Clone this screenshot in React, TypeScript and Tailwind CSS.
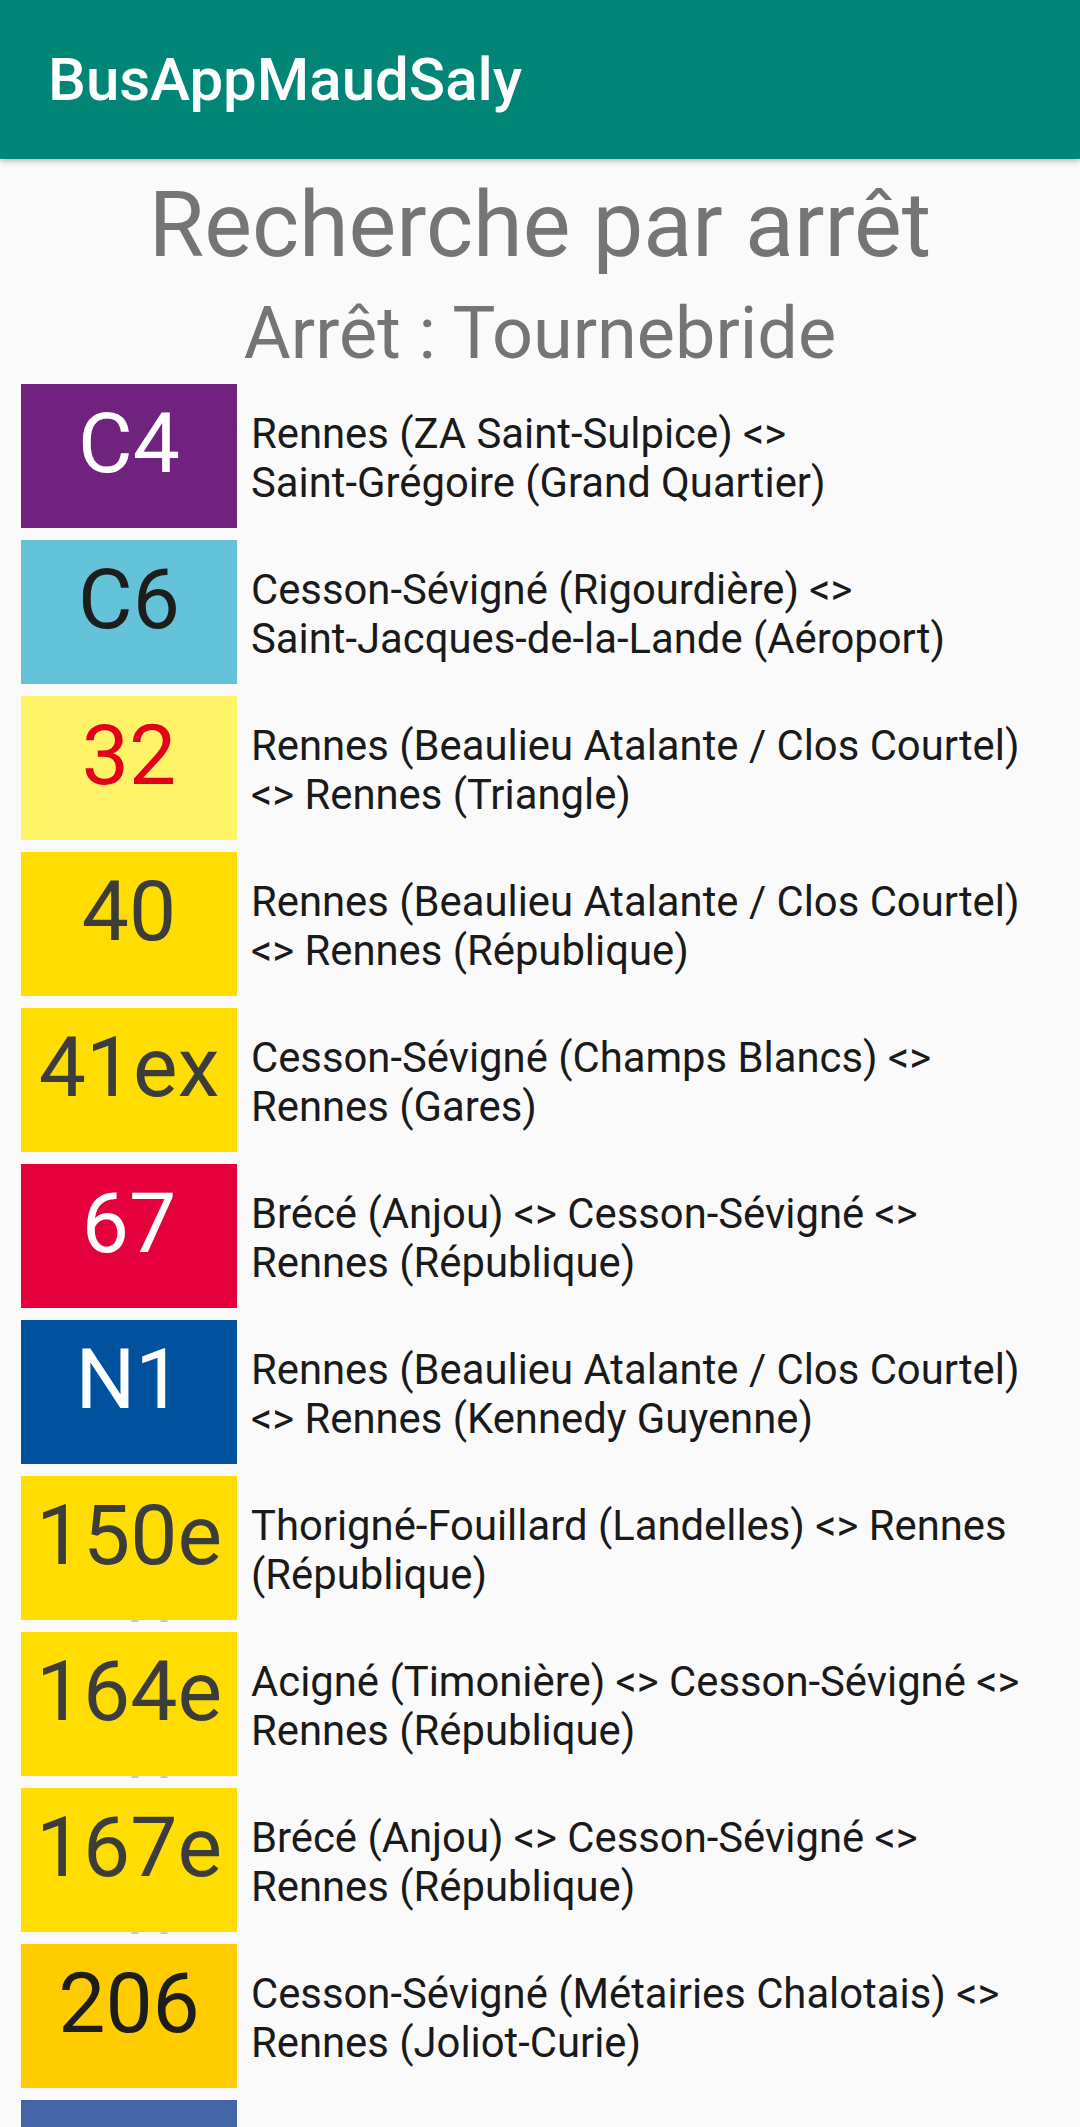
import React from 'react';

type Line = {
  code: string;
  bg: string;
  fg: string;
  text: string[];
  marks?: boolean;
};

const lines: Line[] = [
  {
    code: 'C4',
    bg: 'bg-[#6f237f]',
    fg: 'text-white',
    text: ['Rennes (ZA Saint-Sulpice) <>', 'Saint-Grégoire (Grand Quartier)'],
  },
  {
    code: 'C6',
    bg: 'bg-[#64c3d9]',
    fg: 'text-[#1d1d1b]',
    text: ['Cesson-Sévigné (Rigourdière) <>', 'Saint-Jacques-de-la-Lande (Aéroport)'],
  },
  {
    code: '32',
    bg: 'bg-[#fff367]',
    fg: 'text-[#e2001a]',
    text: ['Rennes (Beaulieu Atalante / Clos Courtel)', '<> Rennes (Triangle)'],
  },
  {
    code: '40',
    bg: 'bg-[#ffdd00]',
    fg: 'text-[#3c3c3b]',
    text: ['Rennes (Beaulieu Atalante / Clos Courtel)', '<> Rennes (République)'],
  },
  {
    code: '41ex',
    bg: 'bg-[#ffdd00]',
    fg: 'text-[#3c3c3b]',
    text: ['Cesson-Sévigné (Champs Blancs) <>', 'Rennes (Gares)'],
  },
  {
    code: '67',
    bg: 'bg-[#e4003a]',
    fg: 'text-white',
    text: ['Brécé (Anjou) <> Cesson-Sévigné <>', 'Rennes (République)'],
  },
  {
    code: 'N1',
    bg: 'bg-[#00519e]',
    fg: 'text-white',
    text: ['Rennes (Beaulieu Atalante / Clos Courtel)', '<> Rennes (Kennedy Guyenne)'],
  },
  {
    code: '150e',
    bg: 'bg-[#ffdd00]',
    fg: 'text-[#3c3c3b]',
    text: ['Thorigné-Fouillard (Landelles) <> Rennes', '(République)'],
    marks: true,
  },
  {
    code: '164e',
    bg: 'bg-[#ffdd00]',
    fg: 'text-[#3c3c3b]',
    text: ['Acigné (Timonière) <> Cesson-Sévigné <>', 'Rennes (République)'],
    marks: true,
  },
  {
    code: '167e',
    bg: 'bg-[#ffdd00]',
    fg: 'text-[#3c3c3b]',
    text: ['Brécé (Anjou) <> Cesson-Sévigné <>', 'Rennes (République)'],
    marks: true,
  },
  {
    code: '206',
    bg: 'bg-[#ffcc00]',
    fg: 'text-[#1d1d1b]',
    text: ['Cesson-Sévigné (Métairies Chalotais) <>', 'Rennes (Joliot-Curie)'],
  },
  {
    code: '',
    bg: 'bg-[#4565a9]',
    fg: 'text-white',
    text: [],
  },
];

function LineRow({ line }: { line: Line }) {
  return (
    <div className="flex items-start">
      <div
        className={`relative flex h-[144px] w-[216px] shrink-0 justify-center pt-[18px] ${line.bg}`}
      >
        <span className={`text-[84px] leading-none ${line.fg}`}>{line.code}</span>
        {/* tiny bits of a clipped second line peeking under the badge */}
        {line.marks && (
          <>
            <span className="absolute top-full left-[110px] h-[2px] w-[8px] rounded-t-full bg-[#c8c8c2]" />
            <span className="absolute top-full left-[139px] h-[2px] w-[8px] rounded-t-full bg-[#c8c8c2]" />
          </>
        )}
      </div>
      <div className="ml-[14px] pt-[25px] text-[41.8px] leading-[49px] text-[#1a1a1a]">
        {line.text.map((t) => (
          <div key={t} className="whitespace-nowrap">
            {t}
          </div>
        ))}
      </div>
    </div>
  );
}

export default function App() {
  return (
    <div className="min-h-screen bg-[#fafafa] font-['Roboto','Liberation_Sans',sans-serif]">
      <header className="relative z-10 flex h-[159px] items-center bg-[#008577] px-[48px] shadow-[0_2px_6px_rgba(0,0,0,0.28)]">
        <h1 className="text-[60px] font-medium leading-none text-white">BusAppMaudSaly</h1>
      </header>

      <div className="pt-[14px] text-center text-[#757575]">
        <h2 className="text-[90px] leading-[106px]">Recherche par arrêt</h2>
        <h3 className="mt-[13px] text-[72px] leading-[84px]">Arrêt : Tournebride</h3>
      </div>

      <div className="mt-[8px] flex flex-col gap-[12px] pl-[21px]">
        {lines.map((line, i) => (
          <LineRow key={i} line={line} />
        ))}
      </div>
    </div>
  );
}
